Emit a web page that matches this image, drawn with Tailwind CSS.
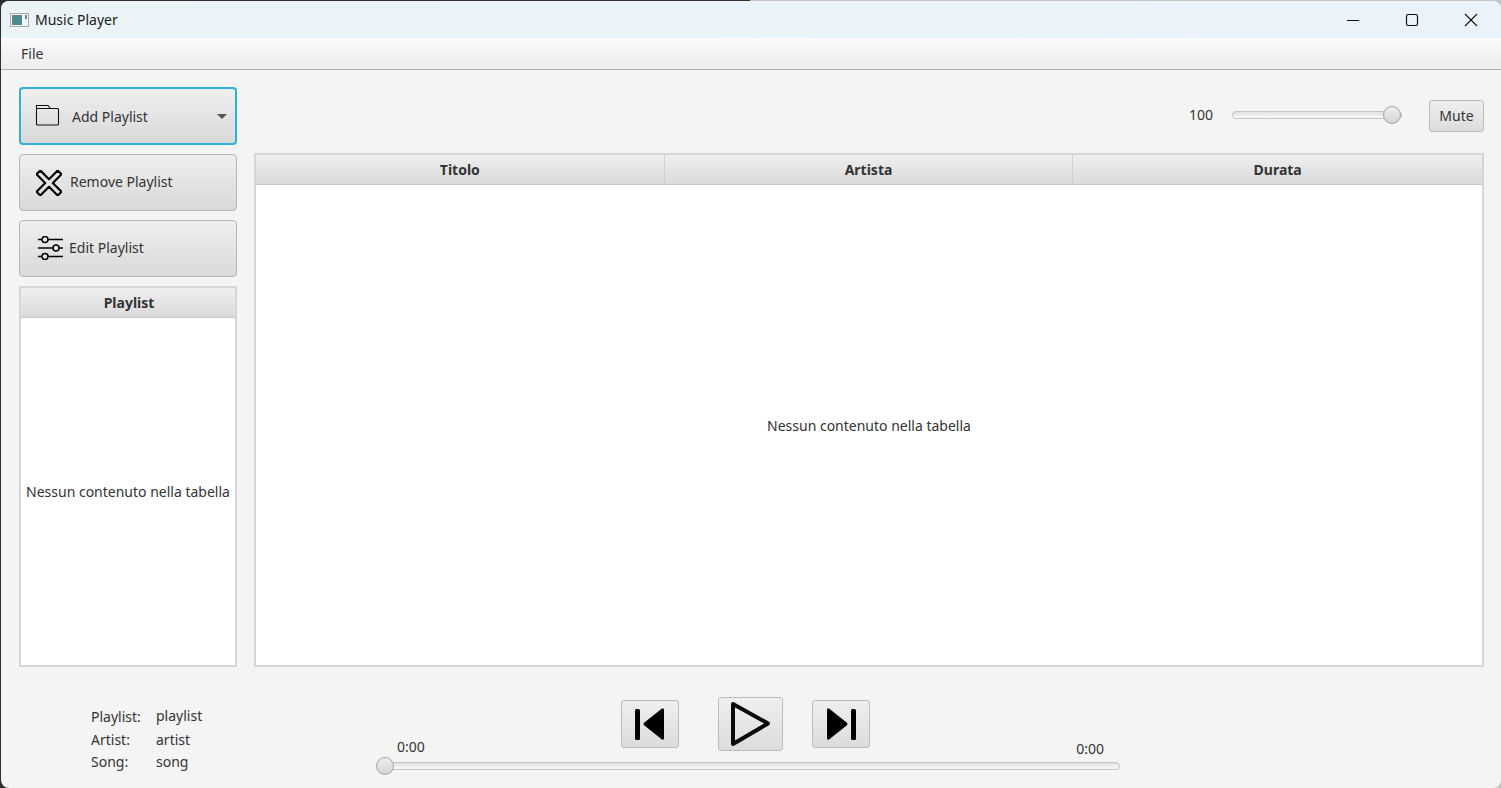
<!DOCTYPE html>
<html>
<head>
<meta charset="utf-8">
<title>Music Player</title>
<script src="https://cdn.jsdelivr.net/npm/@tailwindcss/browser@4"></script>
</head>
<body class="w-[1501px] h-[788px] overflow-hidden bg-gradient-to-r from-[#2e2e2e] from-50% to-[#c4c4c4] to-50% font-['Noto_Sans',sans-serif] text-[14px] text-[#333]">
<div class="w-[1500px] h-[787px] mt-px ml-px rounded-[8px] overflow-hidden bg-[#f4f4f4] flex flex-col">

  <!-- title bar -->
  <div class="h-[37px] shrink-0 flex items-center bg-gradient-to-r from-[#eaf4f7] to-[#ebf3fa] text-[#1a1a1a]">
    <svg class="ml-[9px]" width="20" height="16" viewBox="0 0 20 16">
      <rect x="0.500" y="1.500" width="18" height="13" fill="#f4f6f6" stroke="#a9a9a9"/>
      <rect x="2" y="3" width="10" height="10" fill="#4d8a8c"/>
      <rect x="15" y="3" width="2" height="4" fill="#5a8f90"/>
    </svg>
    <span class="ml-[5px]">Music Player</span>
    <div class="ml-auto flex items-center">
      <svg class="mr-[45px]" width="14" height="14" viewBox="0 0 14 14"><path d="M1 7.500h12" stroke="#111" stroke-width="1" fill="none"/></svg>
      <svg class="mr-[45px]" width="14" height="14" viewBox="0 0 14 14"><rect x="1.500" y="1.500" width="11" height="11" rx="1.500" stroke="#111" stroke-width="1.200" fill="none"/></svg>
      <svg class="mr-[23px]" width="14" height="14" viewBox="0 0 14 14"><path d="M1 1l12 12M13 1L1 13" stroke="#111" stroke-width="1.100" fill="none"/></svg>
    </div>
  </div>

  <!-- menu bar -->
  <div class="h-[32px] shrink-0 flex items-center pl-[20px] bg-gradient-to-b from-[#fbfbfb] to-[#ececec] border-b border-[#b0b0b0]">File</div>

  <!-- main -->
  <div class="flex h-[597px] shrink-0 pl-[18px] pr-[17px]">
    <div class="w-[218px] shrink-0 flex flex-col pt-[17px]">
      <button class="h-[58px] flex items-center rounded-[4px] border-2 border-[#2fb0dc] bg-gradient-to-b from-[#efefef] to-[#d9d9d9] pl-[14px] pr-[8px]">
        <svg class="-mt-[3px]" width="25" height="22" viewBox="0 0 25 22" fill="none"><path d="M1.500 4.500H22.500a1 1 0 0 1 1 1V20a1 1 0 0 1-1 1H2.500a1 1 0 0 1-1-1V1.500H13L15.500 4.500" stroke="#111" stroke-width="1.100"/></svg>
        <span class="ml-[12px]">Add Playlist</span>
        <span class="ml-auto w-0 h-0 border-x-[5px] border-x-transparent border-t-[5px] border-t-[#555]"></span>
      </button>
      <button class="h-[57px] mt-[9px] flex items-center rounded-[4px] border border-[#b6b6b6] bg-gradient-to-b from-[#efefef] to-[#d9d9d9] pl-[16px]">
        <svg width="26" height="26" viewBox="0 0 26 26" fill="none"><path transform="translate(13 13) rotate(45)" d="M-2.700 -15H2.700V-2.700H15V2.700H2.700V15H-2.700V2.700H-15V-2.700H-2.700Z" stroke="#000" stroke-width="2.200" stroke-linejoin="round"/></svg>
        <span class="ml-[8px] -mt-[2px]">Remove Playlist</span>
      </button>
      <button class="h-[57px] mt-[9px] flex items-center rounded-[4px] border border-[#b6b6b6] bg-gradient-to-b from-[#efefef] to-[#d9d9d9] pl-[18px]">
        <svg class="-mt-[1px]" width="25" height="24" viewBox="0 0 25 24" fill="none" stroke="#000" stroke-width="1.500"><path d="M0 3.500h4M10 3.500h15M0 12h15M21 12h4M0 20.500h4M10 20.500h15"/><circle cx="7" cy="3.500" r="3"/><circle cx="18" cy="12" r="3"/><circle cx="7" cy="20.500" r="3"/></svg>
        <span class="ml-[6px] -mt-[2px]">Edit Playlist</span>
      </button>
      <div class="h-[381px] mt-[9px] flex flex-col border-2 border-[#d6d6d6] bg-white">
        <div class="h-[30px] shrink-0 flex items-center justify-center pl-[2px] font-bold bg-gradient-to-b from-[#efefef] to-[#dadada] border-b border-[#c8c8c8]">Playlist</div>
        <div class="flex-1 flex items-center justify-center whitespace-nowrap">Nessun contenuto nella tabella</div>
      </div>
    </div>

    <div class="flex-1 flex flex-col ml-[17px]">
      <div class="h-[83px] shrink-0 flex items-center justify-end pt-[6px]">
        <span class="mr-px">100</span>
        <div class="relative w-[170px] h-[8px] ml-[18px] rounded-full border border-[#c4c4c4] bg-gradient-to-b from-[#e0e0e0] to-[#fafafa]">
          <span class="absolute right-0 top-[-6px] w-[18px] h-[18px] rounded-full border border-[#a4a4a4] bg-gradient-to-b from-[#efefef] to-[#d4d4d4]"></span>
        </div>
        <button class="w-[55px] h-[32px] ml-[27px] mt-[2px] rounded-[3px] border border-[#bcbcbc] bg-gradient-to-b from-[#efefef] to-[#dcdcdc]">Mute</button>
      </div>
      <div class="flex-1 flex flex-col border-2 border-[#d6d6d6] bg-white">
        <div class="h-[30px] shrink-0 grid grid-cols-3 font-bold bg-gradient-to-b from-[#efefef] to-[#dadada] border-b border-[#c8c8c8]">
          <div class="flex items-center justify-center border-r border-[#cfcfcf]">Titolo</div>
          <div class="flex items-center justify-center border-r border-[#cfcfcf]">Artista</div>
          <div class="flex items-center justify-center">Durata</div>
        </div>
        <div class="flex-1 flex items-center justify-center">Nessun contenuto nella tabella</div>
      </div>
    </div>
  </div>

  <!-- player -->
  <div class="flex-1 flex">
    <div class="w-[376px] shrink-0 pl-[90px] pt-[38px]">
      <div class="grid grid-cols-[65px_1fr] auto-rows-[23px] items-center">
        <span>Playlist:</span><span class="-mt-[2px]">playlist</span>
        <span>Artist:</span><span>artist</span>
        <span class="-mt-[2px]">Song:</span><span class="-mt-[2px]">song</span>
      </div>
    </div>
    <div class="w-[743px] shrink-0 flex flex-col">
      <div class="flex items-center h-[54px] mt-[30px] pl-[244px]">
        <button class="w-[58px] h-[48px] flex items-center justify-center rounded-[3px] border border-[#bcbcbc] bg-gradient-to-b from-[#efefef] to-[#dcdcdc]">
          <svg width="32" height="32" viewBox="0 0 32 32"><rect x="1" y="1" width="5" height="31" rx="1.500"/><path d="M30 1.500v29q0 1.500-2 1L11 18q-3-2 0-4L28 .5q2-.5 2 1z"/></svg>
        </button>
        <button class="w-[65px] h-[54px] ml-[39px] flex items-center justify-center rounded-[3px] border border-[#bcbcbc] bg-gradient-to-b from-[#efefef] to-[#dcdcdc]">
          <svg width="40" height="46" viewBox="0 0 40 46" fill="none"><path d="M2 3L37 22.500L2 43Z" stroke="#0a0a0a" stroke-width="4" stroke-linejoin="round"/></svg>
        </button>
        <button class="w-[58px] h-[48px] ml-[29px] flex items-center justify-center rounded-[3px] border border-[#bcbcbc] bg-gradient-to-b from-[#efefef] to-[#dcdcdc]">
          <svg width="32" height="32" viewBox="0 0 32 32"><rect x="26" y="1" width="5" height="31" rx="1.500"/><path d="M2 1.500v29q0 1.500 2 1L21 18q3-2 0-4L4 .5q-2-.5-2 1z"/></svg>
        </button>
      </div>
      <div class="flex justify-between items-start h-[22px] -mt-[15px] pl-[20px] pr-[16px]">
        <span>0:00</span>
        <span class="mt-[2px]">0:00</span>
      </div>
      <div class="relative w-[742px] h-[8px] ml-px mt-[4px] rounded-full border border-[#c4c4c4] bg-gradient-to-b from-[#e0e0e0] to-[#fafafa]">
        <span class="absolute left-[-3px] top-[-6px] w-[18px] h-[18px] rounded-full border border-[#a4a4a4] bg-gradient-to-b from-[#efefef] to-[#d4d4d4]"></span>
      </div>
    </div>
  </div>
</div>
</body>
</html>
